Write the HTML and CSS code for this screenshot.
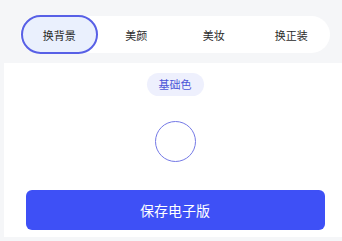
FILE: index.html
```html
<!DOCTYPE html>
<html lang="zh-CN">

<head>
  <meta charset="UTF-8">
  <meta name="viewport" content="width=device-width, initial-scale=1.0">
  <title>证件照</title>
  <link rel="stylesheet" href="styles.css">
</head>

<body>
  <!-- 顶部切换栏 -->
  <div class="top-area">
    <div class="tab-bar">
      <div class="tab active">换背景</div>
      <div class="tab">美颜</div>
      <div class="tab">美妆</div>
      <div class="tab">换正装</div>
    </div>
  </div>

  <!-- 背景色面板 -->
  <div class="panel">
    <div class="chip-row">
      <span class="chip">基础色</span>
    </div>
    <div class="color-row">
      <div class="color-dot"></div>
    </div>
    <button class="save-btn">保存电子版</button>
  </div>
</body>

</html>
```

FILE: styles.css
```css
/* 全局样式 */
body {
  margin: 0;
  padding: 0;
  background-color: #f5f6f8;
  font-family: "Noto Sans CJK SC", "Liberation Sans", sans-serif;
  overflow: hidden;
}

/* 顶部切换栏 */
.top-area {
  height: 63px;
  padding: 15px 10px 0 20px;
  box-sizing: border-box;
}

.tab-bar {
  display: grid;
  grid-template-columns: repeat(4, 1fr);
  width: 310px;
  height: 37px;
  margin-top: 1px;
  background-color: white;
  border-radius: 19px;
}

.tab {
  display: flex;
  align-items: center;
  justify-content: center;
  font-size: 11px;
  color: #2b2b2b;
}

.tab.active {
  margin: -1px 0 -1px 1px;
  border: 2px solid #5860e6;
  border-radius: 20px;
  background-color: #eaf0fd;
}

/* 面板 */
.panel {
  margin-left: 4px;
  width: 342px;
  height: 174px;
  background-color: white;
  display: flex;
  flex-direction: column;
  align-items: center;
  padding-top: 7px;
  box-sizing: border-box;
}

.chip {
  display: inline-block;
  padding: 0 12px;
  height: 23px;
  line-height: 23px;
  border-radius: 12px;
  background-color: #eef0fd;
  color: #4a55d8;
  font-size: 11px;
}

.color-row {
  margin-top: 25px;
}

.color-dot {
  width: 39px;
  height: 39px;
  border: 1.5px solid #7479e6;
  border-radius: 50%;
  background-color: white;
}

.save-btn {
  margin-top: 28px;
  width: 299px;
  height: 40px;
  border: none;
  border-radius: 6px;
  background-color: #3e50f6;
  color: white;
  font-size: 14px;
  font-family: inherit;
}
```
